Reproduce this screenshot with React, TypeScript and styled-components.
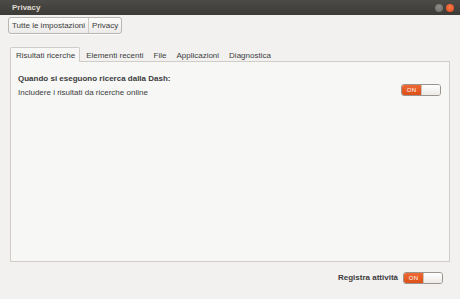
import React from 'react';
import styled, { createGlobalStyle } from 'styled-components';

const GlobalStyle = createGlobalStyle`
  html, body {
    margin: 0;
    padding: 0;
    background: #f2f1f0;
  }
  body {
    font-family: 'Liberation Sans', Arial, sans-serif;
    font-size: 8px;
    color: #3c3c3c;
  }
`;

const Window = styled.div`
  width: 460px;
  height: 299px;
  display: flex;
  flex-direction: column;
  background: #f2f1f0;
  overflow: hidden;
`;

const TitleBar = styled.div`
  height: 15px;
  flex: none;
  display: flex;
  align-items: center;
  justify-content: space-between;
  padding: 0 6px 0 12px;
  background: linear-gradient(#4d4b47, #3c3b37);
  color: #dfdbd2;
  font-weight: bold;
  font-size: 8px;
`;

const WinButtons = styled.div`
  display: flex;
  gap: 3px;
`;

const WinButton = styled.span<{ $close?: boolean }>`
  width: 8px;
  height: 8px;
  border-radius: 50%;
  background: ${(p) =>
    p.$close
      ? 'radial-gradient(circle at 50% 40%, #f7794a, #e0491a)'
      : 'radial-gradient(circle at 50% 40%, #8d8b86, #6c6a65)'};
`;

const Body = styled.div`
  flex: 1;
  display: flex;
  flex-direction: column;
  padding: 2px 10px 0 10px;
`;

const Breadcrumb = styled.div`
  align-self: flex-start;
  margin-left: -2px;
  display: flex;
  height: 15px;
  border: 1px solid #b9b6b1;
  border-radius: 3px;
  background: linear-gradient(#fbfbfa, #ecebe9);
  box-shadow: 0 1px 0 rgba(255, 255, 255, 0.8);
`;

const Crumb = styled.span<{ $last?: boolean }>`
  display: flex;
  align-items: center;
  padding: 0 3px;
  border-right: ${(p) => (p.$last ? 'none' : '1px solid #cfccc7')};
  color: #3c3c3c;
`;

const TabRow = styled.div`
  display: flex;
  margin-top: 13px;
  position: relative;
  z-index: 1;
`;

const Tab = styled.div<{ $active?: boolean }>`
  height: 14px;
  display: flex;
  align-items: center;
  padding: 0 4px 0 ${(p) => (p.$active ? '5px' : '4px')};
  margin-right: ${(p) => (p.$active ? '1px' : '0')};
  background: ${(p) => (p.$active ? '#f7f7f6' : 'transparent')};
  border: 1px solid ${(p) => (p.$active ? '#d0cdc8' : 'transparent')};
  border-bottom: none;
  border-radius: 2px 2px 0 0;
  margin-bottom: -1px;
`;

const Panel = styled.div`
  box-sizing: border-box;
  flex: none;
  height: 201px;
  border: 1px solid #d0cdc8;
  background: #f7f7f6;
  padding: 12px 8px 0 7px;
  display: flex;
  flex-direction: column;
`;

const Heading = styled.div`
  font-weight: bold;
  height: 10px;
  line-height: 10px;
`;

const OptionRow = styled.div`
  display: flex;
  align-items: center;
  justify-content: space-between;
  margin-top: 3px;
  height: 10px;
`;

const Footer = styled.div`
  flex: 1;
  display: flex;
  align-items: center;
  justify-content: flex-end;
  gap: 5px;
  padding: 0 7px 6px 0;
  font-weight: bold;
`;

const SwitchBox = styled.div<{ $raise?: boolean }>`
  width: 38px;
  height: 10px;
  display: flex;
  border: 1px solid #9b948d;
  border-radius: 3px;
  overflow: hidden;
  background: #fafafa;
  margin-top: ${(p) => (p.$raise ? '-5px' : '0')};
`;

const SwitchOn = styled.span`
  width: 19px;
  display: flex;
  align-items: center;
  justify-content: center;
  background: linear-gradient(#ee6a35, #dd4f16);
  color: #fff;
  font-size: 6px;
  font-weight: normal;
  letter-spacing: 0.2px;
`;

const SwitchKnob = styled.span`
  flex: 1;
  background: linear-gradient(#ffffff, #ebeae8);
  border-left: 1px solid #c8c4bf;
`;

const Switch = ({ raise }: { raise?: boolean }) => (
  <SwitchBox $raise={raise}>
    <SwitchOn>ON</SwitchOn>
    <SwitchKnob />
  </SwitchBox>
);

const tabs = ['Risultati ricerche', 'Elementi recenti', 'File', 'Applicazioni', 'Diagnostica'];

export default function App() {
  return (
    <Window>
      <GlobalStyle />
      <TitleBar>
        <span>Privacy</span>
        <WinButtons>
          <WinButton />
          <WinButton $close />
        </WinButtons>
      </TitleBar>
      <Body>
        <Breadcrumb>
          <Crumb>Tutte le impostazioni</Crumb>
          <Crumb $last>Privacy</Crumb>
        </Breadcrumb>
        <TabRow>
          {tabs.map((t, i) => (
            <Tab key={t} $active={i === 0}>
              {t}
            </Tab>
          ))}
        </TabRow>
        <Panel>
          <Heading>Quando si eseguono ricerca dalla Dash:</Heading>
          <OptionRow>
            <span>Includere i risultati da ricerche online</span>
            <Switch raise />
          </OptionRow>
        </Panel>
        <Footer>
          <span>Registra attività</span>
          <Switch />
        </Footer>
      </Body>
    </Window>
  );
}
